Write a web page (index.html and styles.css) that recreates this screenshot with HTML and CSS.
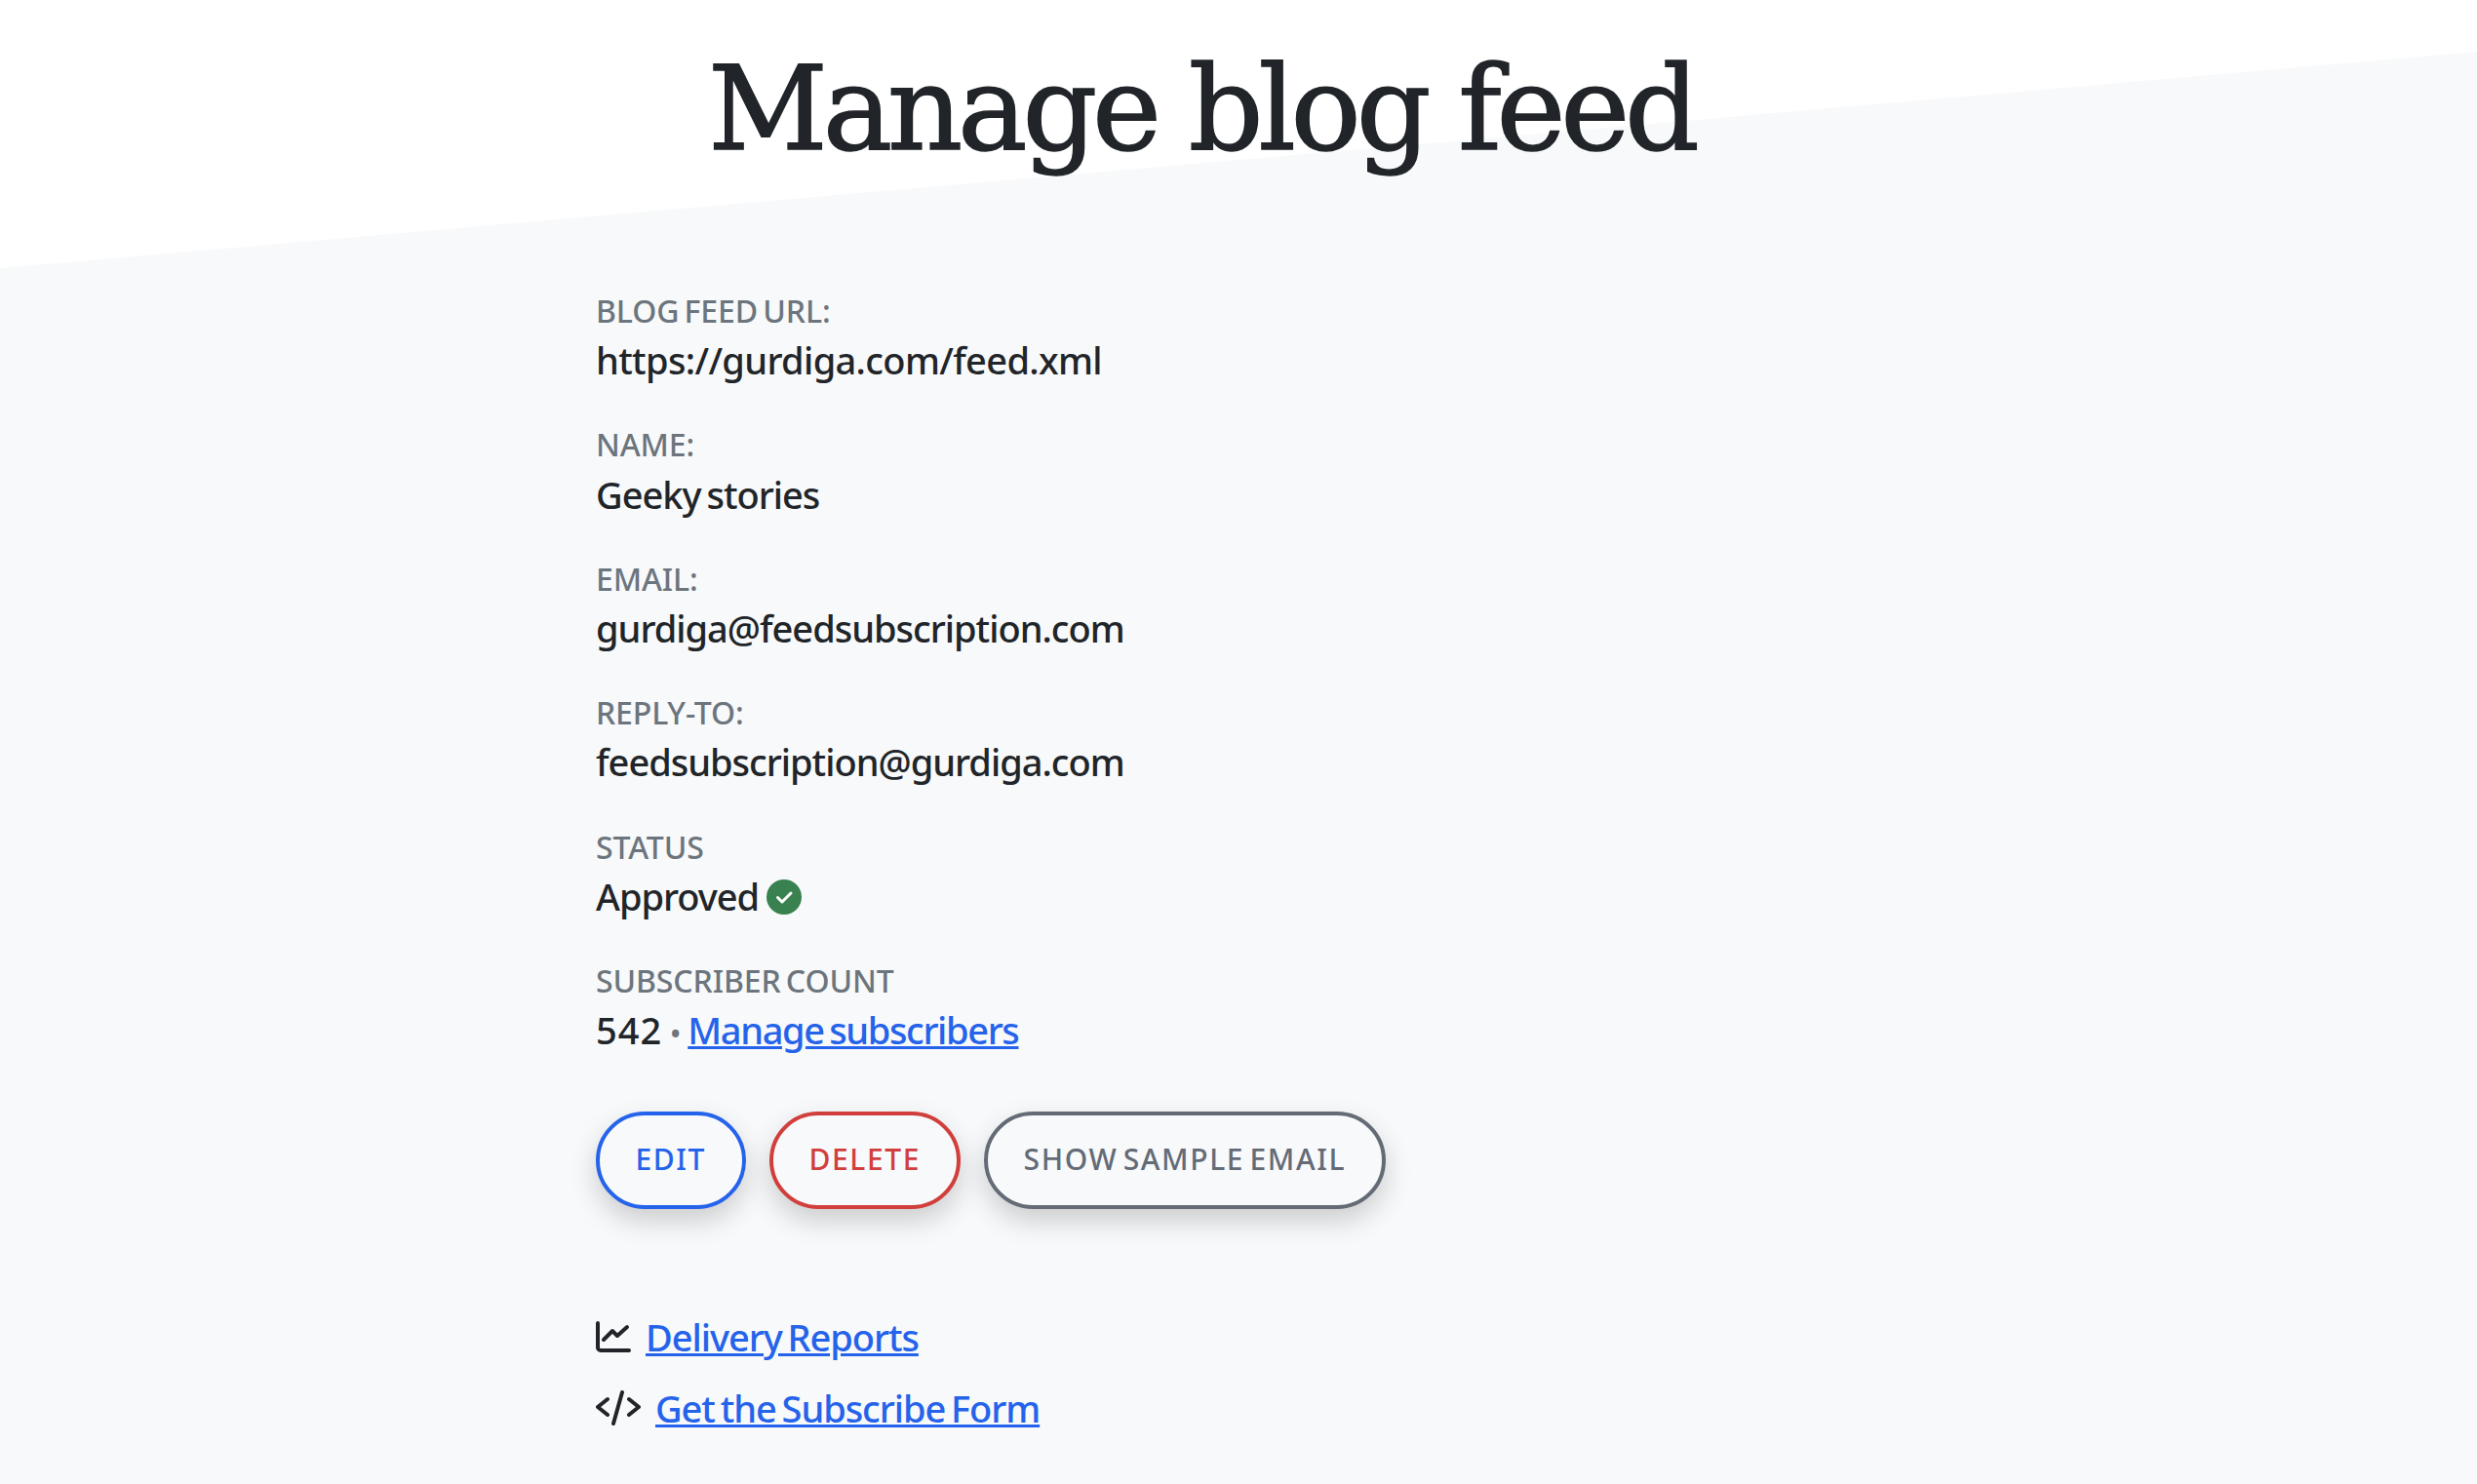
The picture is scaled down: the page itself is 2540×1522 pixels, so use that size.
FILE: index.html
```html
<!DOCTYPE html>
<html lang="en">
<head>
<meta charset="utf-8">
<title>Manage blog feed</title>
<link rel="stylesheet" href="styles.css">
</head>
<body>
<div class="wedge"></div>
<main class="page">
  <h1 class="title">Manage blog feed</h1>
  <dl class="fields">
    <div class="field field-url"><dt>BLOG FEED URL:</dt><dd>https://gurdiga.com/feed.xml</dd></div>
    <div class="field"><dt>NAME:</dt><dd>Geeky stories</dd></div>
    <div class="field"><dt>EMAIL:</dt><dd>gurdiga@feedsubscription.com</dd></div>
    <div class="field"><dt>REPLY-TO:</dt><dd>feedsubscription@gurdiga.com</dd></div>
    <div class="field"><dt>STATUS</dt><dd class="status">Approved
      <svg class="check" viewBox="0 0 36 36" aria-hidden="true"><circle cx="18" cy="18" r="18" fill="#39814e"/><path d="M11.5 18.5l4.5 4.5 9-9" fill="none" stroke="#fff" stroke-width="3" stroke-linecap="round" stroke-linejoin="round"/></svg></dd></div>
    <div class="field"><dt>SUBSCRIBER COUNT</dt><dd><span class="count">542</span> <span class="dot">•</span> <a class="manage" href="#">Manage subscribers</a></dd></div>
  </dl>
  <div class="buttons">
    <button class="btn btn-blue">EDIT</button>
    <button class="btn btn-red">DELETE</button>
    <button class="btn btn-grey">SHOW SAMPLE EMAIL</button>
  </div>
  <ul class="links">
    <li><svg class="icon chart" viewBox="0 0 36 32" aria-hidden="true"><path d="M2 2V27a3 3 0 0 0 3 3h29" fill="none" stroke="#212529" stroke-width="4" stroke-linecap="round"/><path d="M8 19l9-9 5 5 10-9" fill="none" stroke="#212529" stroke-width="4" stroke-linecap="round" stroke-linejoin="round"/></svg><a href="#">Delivery Reports</a></li>
    <li><svg class="icon code" viewBox="0 0 46 36" aria-hidden="true"><path d="M12 9L2 17l10 8M34 9l10 8-10 8M27 2l-9 32" fill="none" stroke="#212529" stroke-width="4" stroke-linecap="round" stroke-linejoin="round"/></svg><a href="#">Get the Subscribe Form</a></li>
  </ul>
</main>
</body>
</html>
```
FILE: styles.css
```css
* { box-sizing: border-box; }
html, body { margin: 0; padding: 0; }
body {
  min-height: 1522px;
  background: #f8f9fa;
  color: #212529;
  font-family: "Noto Sans", sans-serif;
  overflow: hidden;
}
.wedge {
  position: absolute;
  left: 0;
  top: 0;
  width: 100%;
  height: 275px;
  background: #fff;
  clip-path: polygon(0 0, 100% 0, 100% 53px, 0 100%);
}
.page {
  position: relative;
  width: 1318px;
  margin: 0 auto;
}
.title {
  margin: 0 0 0 115px;
  padding-top: 28px;
  height: 294px;
  font-family: "DejaVu Serif", serif;
  font-weight: 400;
  font-size: 120px;
  line-height: 168px;
  letter-spacing: -5.2px;
  -webkit-text-stroke: 1.5px #212529;
  white-space: nowrap;
}
.fields { margin: 0; }
.field { margin: 0 0 34.6px; }
dt {
  color: #6c757d;
  font-size: 32px;
  font-weight: 500;
  line-height: 49.3px;
  letter-spacing: -.1px;
  word-spacing: -3px;
}
dd {
  margin: 0;
  font-size: 38px;
  font-weight: 500;
  line-height: 53.5px;
  letter-spacing: -1px;
  word-spacing: -3px;
}
.field-url dd { letter-spacing: -.65px; }
.status { display: flex; align-items: center; gap: 8px; }
.check { width: 36px; height: 36px; }
.count { letter-spacing: 1px; }
.dot { color: #6c757d; font-size: 30px; margin: 0 2px; }
a { color: #2563eb; }
.manage { letter-spacing: -1.36px; }
.buttons { display: flex; gap: 24.5px; margin-top: 53.5px; }
.btn {
  height: 100px;
  padding: 0 36.5px 4px;
  background: #f8f9fb;
  border: 4px solid;
  border-radius: 50px;
  font-family: "Noto Sans", sans-serif;
  font-size: 30px;
  letter-spacing: 1.6px;
  word-spacing: -4px;
  font-weight: 500;
  box-shadow: 0 12px 28px rgba(0, 0, 0, .18);
}
.btn-blue { color: #2563eb; border-color: #2563eb; }
.btn-red { color: #d13f3c; border-color: #d13f3c; }
.btn-grey { color: #646b76; border-color: #646b76; }
.links { list-style: none; margin: 94.5px 0 0; padding: 0; font-size: 38px; font-weight: 500; letter-spacing: -1.05px; word-spacing: -3px; }
.links li { display: flex; align-items: center; gap: 15px; height: 73px; }
.icon { display: block; flex: none; }
.chart { width: 36px; height: 32px; }
.code { width: 46px; height: 36px; }
```
